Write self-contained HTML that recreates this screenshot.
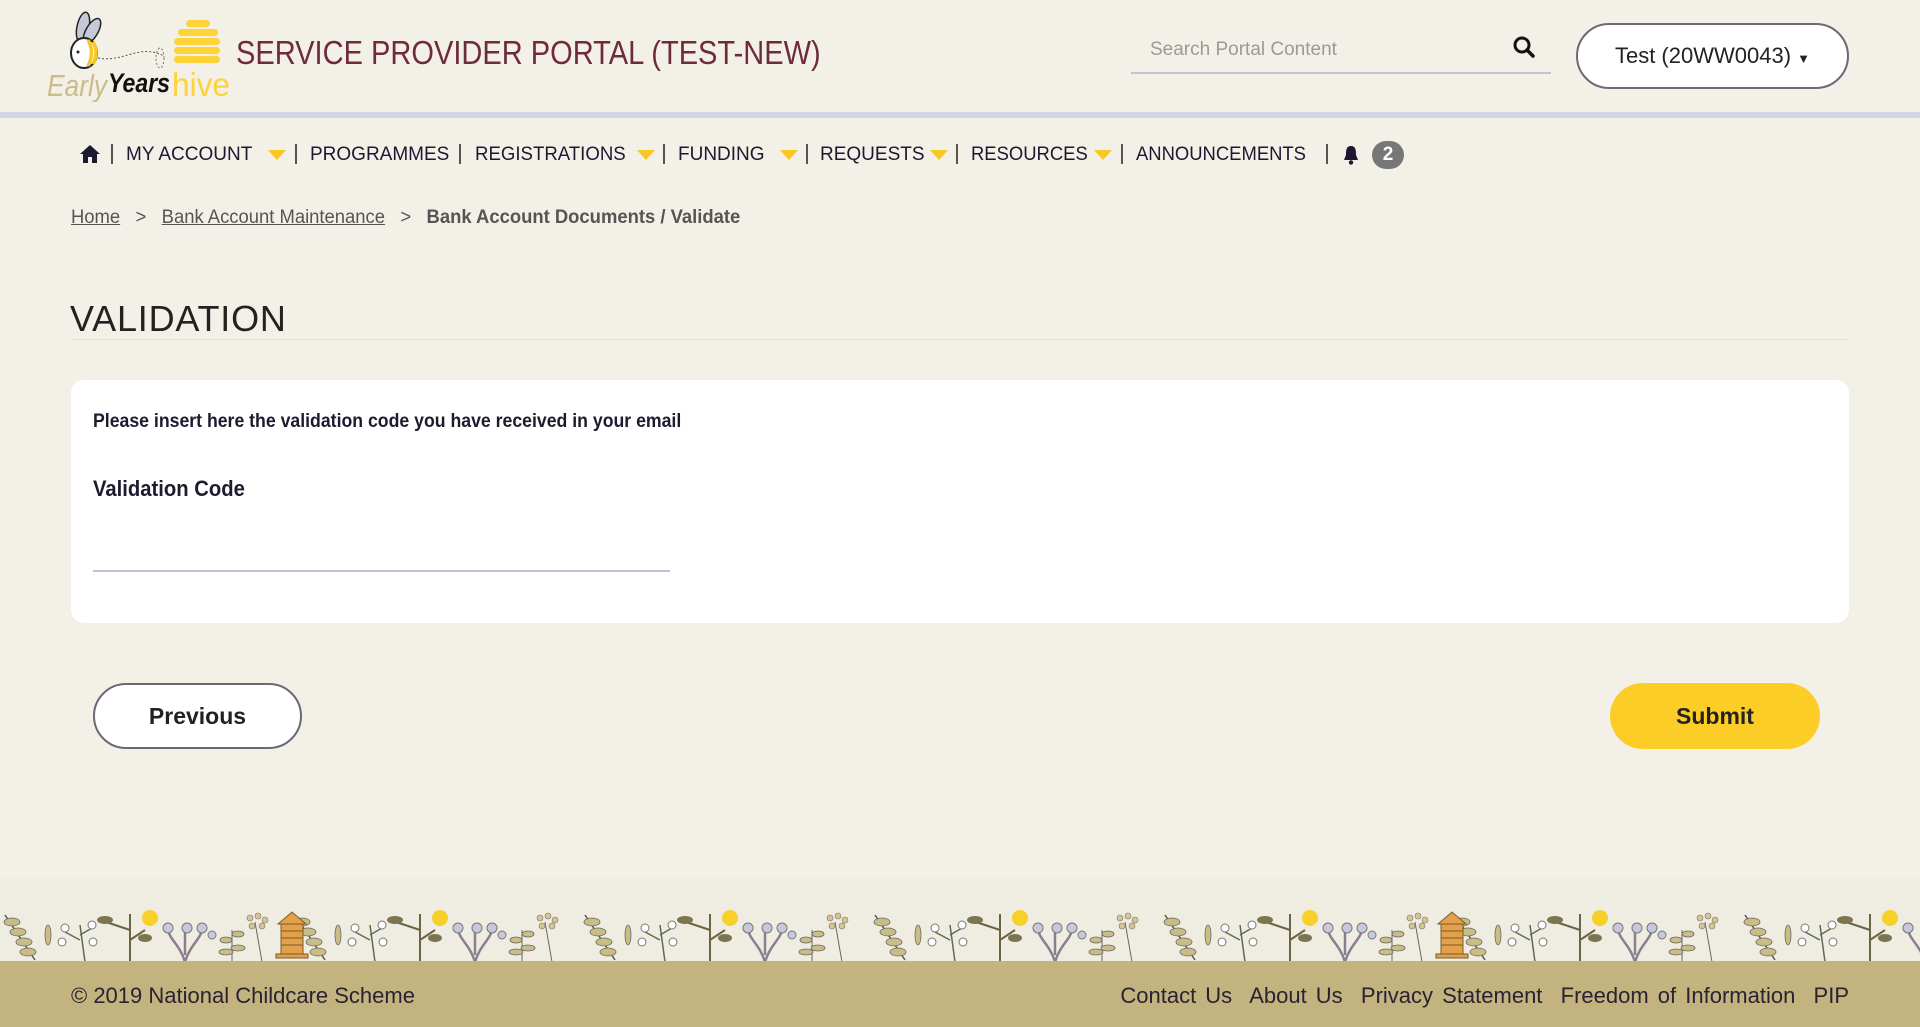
<!DOCTYPE html>
<html><head><meta charset="utf-8">
<style>
*{margin:0;padding:0;box-sizing:border-box}
body{width:1920px;height:1027px;background:#f3f0e7;font-family:"Liberation Sans",sans-serif;color:#1f1a2e;position:relative;overflow:hidden}
.a{position:absolute;white-space:nowrap}
.nav{top:144px;font-size:19px;color:#1c1830;line-height:22px}
.sep{position:absolute;top:144px;width:2px;height:20px;background:#555}
.tri{position:absolute;top:150px;width:0;height:0;border-left:9px solid transparent;border-right:9px solid transparent;border-top:10px solid #f7c824}
</style></head><body>
<!-- logo -->
<svg class="a" style="left:44px;top:8px" width="192" height="94" viewBox="0 0 192 94">
 <ellipse cx="39" cy="19" rx="6" ry="15" transform="rotate(12 39 19)" fill="#c7cad6" stroke="#222" stroke-width="1.5"/>
 <ellipse cx="48" cy="23" rx="6" ry="14" transform="rotate(30 48 23)" fill="#c7cad6" stroke="#222" stroke-width="1.5"/>
 <ellipse cx="40" cy="45" rx="13" ry="15" fill="#fff" stroke="#222" stroke-width="2"/>
 <path d="M44 32 q7 12 0 26 M49 34 q6 10 0 22" stroke="#f7c824" stroke-width="3.5" fill="none"/>
 <circle cx="34" cy="44" r="1.5" fill="#222"/>
 <path d="M54 50 C80 55 95 35 120 48" stroke="#555" stroke-dasharray="2 2" fill="none"/>
 <ellipse cx="116" cy="50" rx="4" ry="10" fill="none" stroke="#777" stroke-dasharray="2 2"/>
 <g fill="#fdd338"><rect x="142" y="12" width="24" height="7" rx="3.5"/><rect x="134" y="21" width="40" height="7" rx="3.5"/><rect x="130" y="30" width="46" height="7" rx="3.5"/><rect x="130" y="39" width="46" height="7" rx="3.5"/><rect x="130" y="48" width="46" height="7" rx="3.5"/></g>
 <text x="3" y="88" font-family="Liberation Sans" font-size="31" fill="#c9bd8a" font-style="italic" textLength="60" lengthAdjust="spacingAndGlyphs">Early</text>
 <text x="64" y="84" font-family="Liberation Sans" font-size="27" fill="#111" font-style="italic" font-weight="bold" textLength="62" lengthAdjust="spacingAndGlyphs">Years</text>
 <text x="128" y="88" font-family="Liberation Sans" font-size="33" fill="#fdd338" textLength="58" lengthAdjust="spacingAndGlyphs">hive</text>
</svg>
<div class="a" style="left:236px;top:34px;font-size:33px;color:#6e2b3c;transform:scaleX(0.88);transform-origin:left">SERVICE PROVIDER PORTAL (TEST-NEW)</div>
<!-- search -->
<div class="a" style="left:1150px;top:39px;font-size:19px;color:#9a9a9a">Search Portal Content</div>
<div class="a" style="left:1131px;top:72px;width:420px;height:2px;background:#bfc4d6"></div>
<svg class="a" style="left:1512px;top:35px" width="24" height="24" viewBox="0 0 24 24"><circle cx="10" cy="10" r="7" fill="none" stroke="#111" stroke-width="3"/><path d="M15 15 L21 21" stroke="#111" stroke-width="3.5" stroke-linecap="round"/></svg>
<div class="a" style="left:1576px;top:23px;width:273px;height:66px;border:2px solid #6d6873;border-radius:34px;background:#fff;font-size:22px;line-height:62px;text-align:center;color:#222">Test (20WW0043) <span style="font-size:13px">&#9660;</span></div>
<div class="a" style="left:0;top:112px;width:1920px;height:6px;background:#d0d8e3"></div>
<!-- nav -->
<svg class="a" style="left:79px;top:144px" width="22" height="20" viewBox="0 0 22 20"><path d="M11 1 L1 10 H4 V19 H9 V13 H13 V19 H18 V10 H21 Z" fill="#1c1830"/></svg>
<div class="sep" style="left:111px"></div>
<div class="a nav" style="left:126px">MY ACCOUNT</div><div class="tri" style="left:268px"></div>
<div class="sep" style="left:295px"></div>
<div class="a nav" style="left:310px">PROGRAMMES</div>
<div class="sep" style="left:459px"></div>
<div class="a nav" style="left:475px;transform:scaleX(0.98);transform-origin:left">REGISTRATIONS</div><div class="tri" style="left:637px"></div>
<div class="sep" style="left:663px"></div>
<div class="a nav" style="left:678px">FUNDING</div><div class="tri" style="left:780px"></div>
<div class="sep" style="left:806px"></div>
<div class="a nav" style="left:820px">REQUESTS</div><div class="tri" style="left:930px"></div>
<div class="sep" style="left:956px"></div>
<div class="a nav" style="left:971px;transform:scaleX(0.97);transform-origin:left">RESOURCES</div><div class="tri" style="left:1094px"></div>
<div class="sep" style="left:1121px"></div>
<div class="a nav" style="left:1136px;transform:scaleX(0.97);transform-origin:left">ANNOUNCEMENTS</div>
<div class="sep" style="left:1326px"></div>
<svg class="a" style="left:1342px;top:144px" width="18" height="22" viewBox="0 0 18 22"><path d="M9 2 C4 2 4 7 4 11 L2 16 H16 L14 11 C14 7 14 2 9 2 Z" fill="#1c1830"/><circle cx="9" cy="18.5" r="2.2" fill="#1c1830"/></svg>
<div class="a" style="left:1372px;top:141px;width:32px;height:28px;border-radius:14px;background:#777;color:#fff;font-weight:bold;font-size:19px;text-align:center;line-height:28px">2</div>
<!-- breadcrumb -->
<div class="a" style="left:71px;top:207px;font-size:19px;color:#555;transform:scaleX(0.97);transform-origin:left"><span style="text-decoration:underline">Home</span>&nbsp;&nbsp;&nbsp;&gt;&nbsp;&nbsp;&nbsp;<span style="text-decoration:underline">Bank Account Maintenance</span>&nbsp;&nbsp;&nbsp;&gt;&nbsp;&nbsp;&nbsp;<span style="font-weight:bold;color:#555">Bank Account Documents / Validate</span></div>
<div class="a" style="left:70px;top:298px;font-size:36px;color:#222;font-weight:300;letter-spacing:0.8px">VALIDATION</div>
<div class="a" style="left:71px;top:339px;width:1778px;height:1px;background:#e2dfd6"></div>
<!-- card -->
<div class="a" style="left:71px;top:380px;width:1778px;height:243px;background:#fff;border-radius:13px"></div>
<div class="a" style="left:93px;top:411px;font-size:19px;font-weight:bold;color:#1f1a2e;transform:scaleX(0.93);transform-origin:left">Please insert here the validation code you have received in your email</div>
<div class="a" style="left:93px;top:476px;font-size:22px;font-weight:bold;color:#1f1a2e;transform:scaleX(0.92);transform-origin:left">Validation Code</div>
<div class="a" style="left:93px;top:570px;width:577px;height:2px;background:#c1c0d8"></div>
<!-- buttons -->
<div class="a" style="left:93px;top:683px;width:209px;height:66px;border:2px solid #6d6873;border-radius:33px;background:#fff;text-align:center;line-height:62px;font-size:23px;font-weight:bold;color:#222">Previous</div>
<div class="a" style="left:1610px;top:683px;width:210px;height:66px;border-radius:33px;background:#fccc27;text-align:center;line-height:66px;font-size:23px;font-weight:bold;color:#222">Submit</div>
<!-- footer -->
<div class="a" style="left:0;top:879px;width:1920px;height:82px;background:#efede2"></div>
<svg class="a" style="left:0;top:910px" width="1920" height="52">
 <defs>
 <pattern id="p" width="290" height="52" patternUnits="userSpaceOnUse">
  <path d="M5 5 L35 50" stroke="#555" stroke-width="1.5"/>
  <g fill="#c9bd84" stroke="#666" stroke-width="0.8"><ellipse cx="12" cy="12" rx="8" ry="4"/><ellipse cx="18" cy="22" rx="8" ry="4"/><ellipse cx="24" cy="32" rx="8" ry="4"/><ellipse cx="28" cy="42" rx="8" ry="4"/><ellipse cx="48" cy="25" rx="3" ry="10"/></g>
  <path d="M85 52 L80 15 M80 30 L65 22 M80 25 L92 18" stroke="#5e6a55" stroke-width="1.5" fill="none"/>
  <g fill="#fff" stroke="#777"><circle cx="65" cy="18" r="4"/><circle cx="92" cy="15" r="4"/><circle cx="62" cy="32" r="4"/><circle cx="93" cy="32" r="4"/></g>
  <path d="M130 52 L130 4 M130 20 L100 10 M130 30 L145 20" stroke="#6b6443" stroke-width="2" fill="none"/>
  <ellipse cx="105" cy="10" rx="8" ry="4" fill="#7b7550"/><ellipse cx="145" cy="28" rx="7" ry="4" fill="#7b7550"/>
  <circle cx="150" cy="8" r="8" fill="#f7d02a"/>
  <path d="M185 52 C180 35 170 30 168 20 M185 52 C190 35 200 30 202 20 M185 45 L185 20" stroke="#8a7f8f" stroke-width="2.5" fill="none"/>
  <g fill="#c6c8dc" stroke="#777"><circle cx="168" cy="18" r="5"/><circle cx="187" cy="18" r="5"/><circle cx="202" cy="18" r="5"/><circle cx="212" cy="25" r="4"/></g>
  <path d="M232 52 L232 20" stroke="#666"/>
  <g fill="#c9bd84" stroke="#666" stroke-width="0.8"><ellipse cx="226" cy="30" rx="6" ry="3"/><ellipse cx="238" cy="24" rx="6" ry="3"/><ellipse cx="226" cy="42" rx="7" ry="3"/><ellipse cx="238" cy="38" rx="7" ry="3"/></g>
  <path d="M262 52 L255 12" stroke="#666"/>
  <g fill="#d8c48e" stroke="#777" stroke-width="0.6"><circle cx="250" cy="8" r="3"/><circle cx="258" cy="6" r="3"/><circle cx="265" cy="10" r="3"/><circle cx="252" cy="16" r="3"/><circle cx="262" cy="16" r="3"/></g>
 </pattern>
 </defs>
 <rect width="1920" height="52" fill="url(#p)"/>
 <g id="h"><path d="M278 14 L292 2 L306 14 Z" fill="#e3a04a" stroke="#7a5a2a"/><rect x="281" y="14" width="22" height="30" fill="#e3a04a" stroke="#7a5a2a"/><path d="M281 21 H303 M281 28 H303 M281 35 H303" stroke="#7a5a2a"/><rect x="276" y="44" width="32" height="4" fill="#e3a04a" stroke="#7a5a2a"/></g>
 <use href="#h" x="1160"/>
</svg>
<div class="a" style="left:0;top:961px;width:1920px;height:66px;background:#c3b37e"></div>
<div class="a" style="left:71px;top:983px;font-size:22px;color:#2a2233">© 2019 National Childcare Scheme</div>
<div class="a" style="right:71px;top:983px;font-size:22px;color:#2a2233;word-spacing:3px">Contact Us&nbsp; About Us&nbsp; Privacy Statement&nbsp; Freedom of Information&nbsp; PIP</div>
</body></html>
